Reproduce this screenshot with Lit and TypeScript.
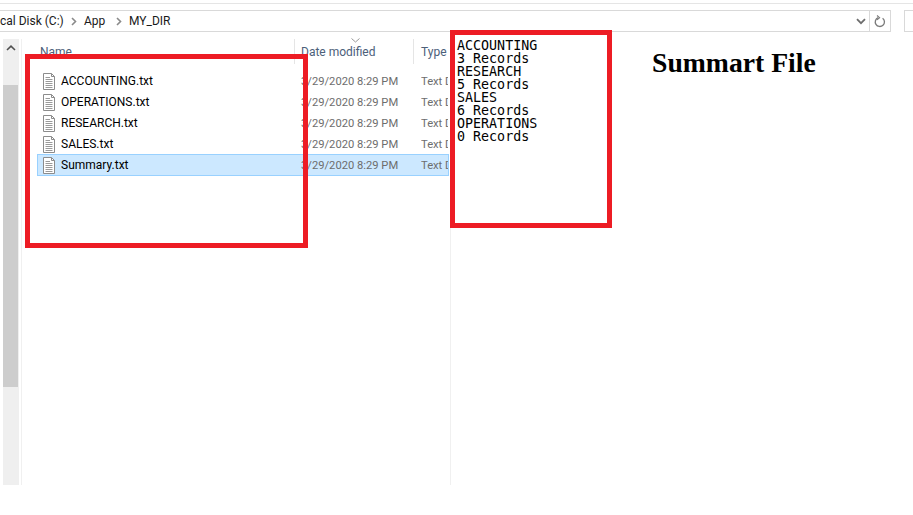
import { LitElement, html, css, svg } from "lit";
import { customElement } from "lit/decorators.js";

const FILES = ["ACCOUNTING.txt", "OPERATIONS.txt", "RESEARCH.txt", "SALES.txt", "Summary.txt"];
const REPORT = ["ACCOUNTING", "3 Records", "RESEARCH", "5 Records", "SALES", "6 Records", "OPERATIONS", "0 Records"];

const fileIcon = svg`<svg class="ficon" width="14" height="17" viewBox="0 0 14 17" fill="none">
  <path d="M1.5 .5H9.5L12.5 3.5V16.5H1.5Z" fill="#fff" stroke="#8c8c8c"/>
  <path d="M9.5 .5V3.5H12.5" stroke="#8c8c8c"/>
  <path d="M3.5 4.5H8M3.5 6.5H10.5M3.5 8.5H10.5M3.5 10.5H10.5M3.5 12.5H10.5M3.5 14.5H10.5" stroke="#9a9a9a"/>
</svg>`;

const crumbSep = svg`<svg class="sep" width="6" height="9" viewBox="0 0 6 9" fill="none"><path d="M1 1L4.5 4.5L1 8" stroke="#8a8a8a" stroke-width="1.6"/></svg>`;

@customElement("app-root")
export class AppRoot extends LitElement {
  static styles = css`
    :host {
      display: block;
      position: relative;
      width: 913px;
      height: 515px;
      overflow: hidden;
      background: #fff;
      font-family: Roboto, "Open Sans", sans-serif;
      font-size: 12px;
      color: #000;
    }
    .topline { height: 1px; margin-top: 3px; background: #e5e5e5; }
    .toolbar { display: flex; height: 22px; margin-top: 6px; }
    .address {
      width: 891px;
      box-sizing: border-box;
      display: flex;
      align-items: center;
      border: 1px solid #d9d9d9;
      border-left: none;
      white-space: nowrap;
    }
    .crumb { color: #1a1a1a; }
    .c1 { width: 69px; }
    .sep { display: block; }
    .s1 { margin: 0 7px 0 2px; }
    .c2 { width: 30px; }
    .s2 { margin: 0 7px 0 2px; }
    .grow { flex: 1; }
    .drop { display: block; margin-right: 3px; }
    .refresh {
      width: 20px;
      height: 100%;
      border-left: 1px solid #d9d9d9;
      display: flex;
      align-items: center;
      justify-content: center;
    }
    .search {
      margin-left: 13px;
      flex: 1;
      border: 1px solid #d9d9d9;
      border-right: none;
    }
    .body { display: flex; height: 446px; margin-top: 7px; }
    .scroll {
      width: 16px;
      margin-left: 3px;
      background: #efefef;
      display: flex;
      flex-direction: column;
    }
    .up { display: block; margin: 6px 0 34px 3px; }
    .thumb { width: 15px; height: 302px; background: #cdcdcd; }
    .pane {
      margin-left: 2px;
      width: 428px;
      border-left: 1px solid #f0f0f0;
      border-right: 1px solid #f0f0f0;
    }
    .head {
      display: grid;
      grid-template-columns: 273px 119px 1fr;
      height: 25px;
      position: relative;
      color: #4c607a;
    }
    .hcell { padding: 6px 0 0 6px; height: 19px; border-right: 1px solid #e5e5e5; }
    .hcell.first { padding-left: 18px; }
    .hcell.last { border: none; padding-left: 7px; }
    .rows { margin: 6px 0 0 15px; width: 412px; }
    .row {
      display: grid;
      grid-template-columns: 258px 125px 1fr;
      height: 22px;
      margin-bottom: -1px;
      box-sizing: border-box;
      align-items: center;
      border: 1px solid transparent;
      white-space: nowrap;
    }
    .row.sel { background: #cce8ff; border-color: #99d1ff; }
    .name { display: flex; align-items: center; gap: 5px; padding-left: 4px; }
    .ficon { display: block; }
    .dim { color: #6d6d6d; overflow: hidden; font-size: 11.2px; }
    .date { padding-left: 5px; }
    .sort { position: absolute; left: 329px; top: -1px; display: block; }
    .box {
      position: absolute;
      box-sizing: border-box;
      border: 5px solid #ed1c24;
    }
    .box.left { left: 25px; top: 54px; width: 283px; height: 194px; }
    .box.report {
      left: 450px;
      top: 30px;
      width: 162px;
      height: 198px;
      background: #fff;
      padding: 4px 0 0 2px;
      font-family: "DejaVu Sans Mono", "Liberation Mono", monospace;
      font-size: 13.33px;
      line-height: 13px;
    }
    .title {
      position: absolute;
      left: 652px;
      top: 47px;
      margin: 0;
      font-family: "Liberation Serif", serif;
      font-weight: bold;
      font-size: 27.7px;
      line-height: 32px;
      white-space: nowrap;
    }
  `;

  render() {
    return html`
      <div class="topline"></div>
      <div class="toolbar">
        <div class="address">
          <span class="crumb c1">cal Disk (C:)</span>
          <span class="s1">${crumbSep}</span>
          <span class="crumb c2">App</span>
          <span class="s2">${crumbSep}</span>
          <span class="crumb">MY_DIR</span>
          <span class="grow"></span>
          <svg class="drop" width="10" height="7" viewBox="0 0 10 7" fill="none"><path d="M1 1.2L5 5.2L9 1.2" stroke="#6e6e6e" stroke-width="1.8"/></svg>
          <div class="refresh">
            <svg width="12" height="13" viewBox="0 0 12 13" fill="none">
              <path d="M4.2 2.6A4.6 4.6 0 1 0 8.6 3.2" stroke="#7a7a7a" stroke-width="1.3"/>
              <path d="M3 .5L5.6 2.7L3 4.9" stroke="#7a7a7a" stroke-width="1.1"/>
            </svg>
          </div>
        </div>
        <div class="search"></div>
      </div>
      <div class="body">
        <div class="scroll">
          <svg class="up" width="10" height="6" viewBox="0 0 10 6" fill="none"><path d="M1 5L5 1.2L9 5" stroke="#505050" stroke-width="1.6"/></svg>
          <div class="thumb"></div>
        </div>
        <div class="pane">
          <div class="head">
            <div class="hcell first">Name</div>
            <div class="hcell">Date modified</div>
            <div class="hcell last">Type</div>
            <svg class="sort" width="9" height="5" viewBox="0 0 9 5" fill="none"><path d="M.5 .5L4.5 4L8.5 .5" stroke="#9a9a9a"/></svg>
          </div>
          <div class="rows">
            ${FILES.map(
              (f) => html`
                <div class="row ${f === "Summary.txt" ? "sel" : ""}">
                  <div class="name">${fileIcon}<span>${f}</span></div>
                  <div class="dim date">3/29/2020 8:29 PM</div>
                  <div class="dim">Text Document</div>
                </div>
              `
            )}
          </div>
        </div>
      </div>
      <div class="box left"></div>
      <div class="box report">${REPORT.map((l) => html`<div>${l}</div>`)}</div>
      <h1 class="title">Summart File</h1>
    `;
  }
}
